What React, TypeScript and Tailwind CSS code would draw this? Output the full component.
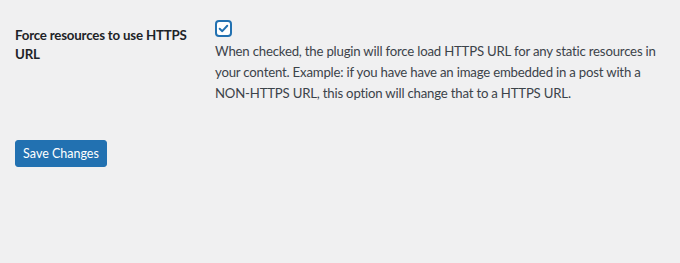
export default function App() {
  return (
    <div className="min-h-[263px] w-[680px] bg-[#f0f0f1] pl-[15px] pt-[5px] text-[13px] tracking-[-0.15px] text-[#3c434a]" style={{ fontFamily: 'Lato, "Noto Sans", sans-serif' }}>
      <div className="flex">
        <div className="w-[200px] shrink-0 pt-[21px] pr-[10px] text-[13.3px] font-bold leading-[19px] tracking-[-0.2px] text-[#1d2327]">
          Force resources to use HTTPS URL
        </div>
        <div className="pt-[15px]">
          <span className="flex h-[17px] w-[17px] items-center justify-center rounded-[4px] border-2 border-[#2271b1] bg-white">
            <svg viewBox="0 0 16 16" className="h-[13px] w-[13px]">
              <path d="M3.3 8.3 L6.5 11.3 L12.6 4.6" fill="none" stroke="#2271b1" strokeWidth="2.4" strokeLinecap="round" strokeLinejoin="round" />
            </svg>
          </span>
          <p className="mt-[4px] whitespace-nowrap text-[13.2px] leading-[21px] tracking-[-0.2px]">
            When checked, the plugin will force load HTTPS URL for any static resources in
            <br />
            your content. Example: if you have have an image embedded in a post with a
            <br />
            NON-HTTPS URL, this option will change that to a HTTPS URL.
          </p>
        </div>
      </div>
      <button className="mt-[36px] h-[27px] w-[92px] rounded-[3px] border border-[#2271b1] bg-[#2271b1] text-[12.5px] leading-[25px] tracking-normal text-white">
        Save Changes
      </button>
    </div>
  );
}
